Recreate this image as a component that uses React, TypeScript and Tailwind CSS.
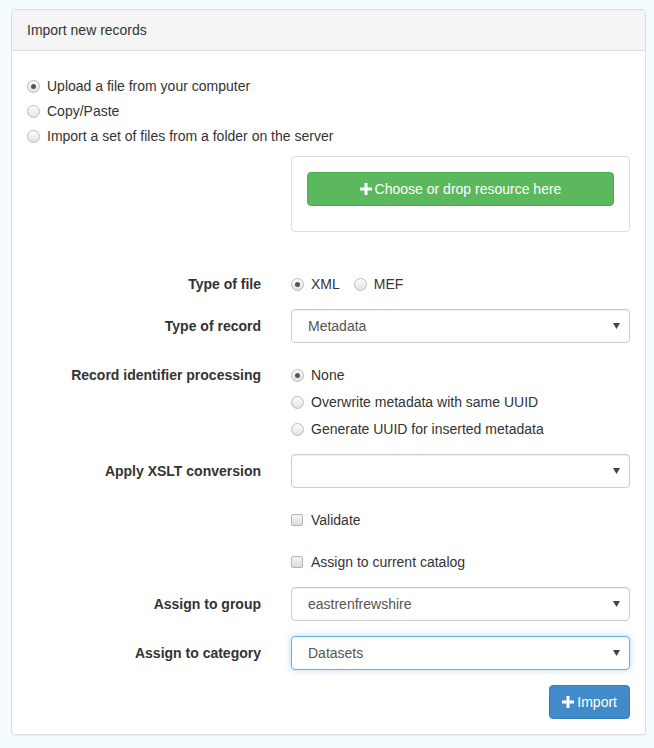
import React from "react";

const Radio = ({ checked, label }: { checked?: boolean; label: string }) => (
  <label className="flex items-center h-5">
    <span className="w-[13px] h-[13px] rounded-full border border-[#bcbcbc] bg-gradient-to-b from-[#fdfdfd] to-[#e2e2e2] flex items-center justify-center shrink-0">
      {checked && <span className="w-[5px] h-[5px] rounded-full bg-[#555]" />}
    </span>
    <span className="ml-[7px]">{label}</span>
  </label>
);

const Check = ({ label }: { label: string }) => (
  <label className="flex items-center h-5">
    <span className="w-[12px] h-[12px] rounded-[2px] border border-[#b5b5b5] bg-gradient-to-b from-[#f5f5f5] to-[#dcdcdc] shrink-0" />
    <span className="ml-2">{label}</span>
  </label>
);

const Plus = () => (
  <svg width="12" height="12" viewBox="0 0 12 12" className="inline-block mr-[3px] -mt-[2px]">
    <path d="M4.5 0h3v4.5H12v3H7.5V12h-3V7.5H0v-3h4.5z" fill="#fff" />
  </svg>
);

const Arrow = () => (
  <svg width="7" height="6" viewBox="0 0 7 6" className="mr-[3px]">
    <path d="M0 0h7L3.5 6z" fill="#444" />
  </svg>
);

const Select = ({ value, focus }: { value: string; focus?: boolean }) => (
  <div
    className={`h-[34px] rounded-[4px] border bg-white flex items-center justify-between pl-[16px] pr-[6px] text-[#555] ${
      focus ? "border-[#66afe9] shadow-[0_0_6px_rgba(102,175,233,0.5)]" : "border-[#ccc] shadow-[inset_0_1px_1px_rgba(0,0,0,0.075)]"
    }`}
  >
    <span>{value}</span>
    <Arrow />
  </div>
);

const Row = ({ label, children }: { label?: string; children: React.ReactNode }) => (
  <div className="flex">
    <div className="w-[264px] pr-[15px] text-right font-bold pt-[7px] leading-5 shrink-0">{label}</div>
    <div className="flex-1 px-[15px]">{children}</div>
  </div>
);

export default function App() {
  return (
    <div
      className="min-h-[748px] bg-[#f5fcff] pt-[9px] pl-[11px] pr-[8px] text-[14px] text-[#333] leading-5"
      style={{ fontFamily: '"Liberation Sans", Arial, sans-serif' }}
    >
      <div className="border border-[#ddd] rounded-[4px] bg-white shadow-[0_1px_1px_rgba(0,0,0,0.05)]">
        <div className="bg-[#f5f5f5] border-b border-[#ddd] rounded-t-[4px] px-[15px] h-[41px] flex items-center">
          Import new records
        </div>
        <div className="p-[15px]">
          <div className="mt-[10px] flex flex-col gap-[5px]">
            <Radio checked label="Upload a file from your computer" />
            <Radio label="Copy/Paste" />
            <Radio label="Import a set of files from a folder on the server" />
          </div>
          <div className="flex mt-[10px] -mx-[15px]">
            <div className="w-[264px] shrink-0" />
            <div className="flex-1 px-[15px]">
              <div className="border border-[#ddd] rounded-[4px] p-[15px] h-[76px]">
                <div className="h-[34px] rounded-[4px] bg-[#5cb85c] border border-[#4cae4c] text-white flex items-center justify-center">
                  <span>
                    <Plus />
                    Choose or drop resource here
                  </span>
                </div>
              </div>
            </div>
          </div>

          <div className="-mx-[15px] mt-[35px] flex flex-col gap-[15px]">
            <Row label="Type of file">
              <div className="flex items-center pt-[7px] gap-[14px]">
                <Radio checked label="XML" />
                <Radio label="MEF" />
              </div>
            </Row>
            <Row label="Type of record">
              <Select value="Metadata" />
            </Row>
            <Row label="Record identifier processing">
              <div className="flex flex-col">
                <div className="pt-[7px]"><Radio checked label="None" /></div>
                <div className="pt-[7px]"><Radio label="Overwrite metadata with same UUID" /></div>
                <div className="pt-[7px]"><Radio label="Generate UUID for inserted metadata" /></div>
              </div>
            </Row>
            <Row label="Apply XSLT conversion">
              <Select value="" />
            </Row>
            <Row>
              <div className="pt-[7px]"><Check label="Validate" /></div>
            </Row>
            <Row>
              <div className="pt-[7px]"><Check label="Assign to current catalog" /></div>
            </Row>
            <Row label="Assign to group">
              <Select value="eastrenfrewshire" />
            </Row>
            <Row label="Assign to category">
              <Select value="Datasets" focus />
            </Row>
            <div className="flex justify-end px-[15px]">
              <div className="h-[34px] px-[12px] rounded-[4px] bg-[#428bca] border border-[#357ebd] text-white flex items-center">
                <span><Plus />Import</span>
              </div>
            </div>
          </div>
        </div>
      </div>
    </div>
  );
}
